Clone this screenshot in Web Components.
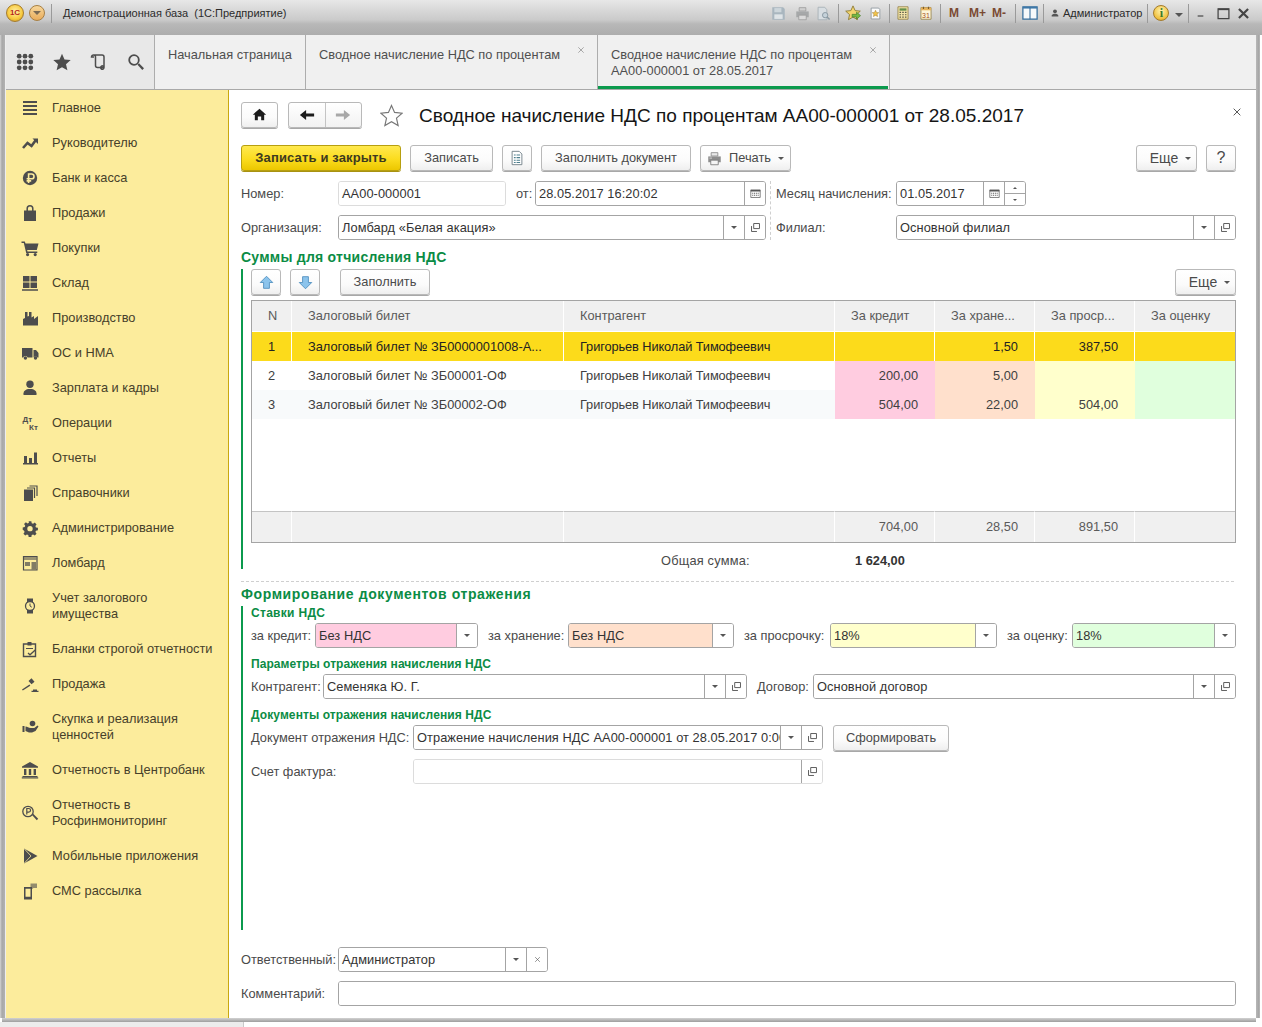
<!DOCTYPE html>
<html lang="ru">
<head>
<meta charset="utf-8">
<title>Сводное начисление НДС по процентам</title>
<style>
  html, body { margin: 0; padding: 0; background: #fff; overflow: hidden; }
  body { font: 12.8px/16px "Liberation Sans", Arial, sans-serif; color: #444; }
</style>
</head>
<body>
<app-shell></app-shell>

<script>
const ICONS = {
  menu: '<path d="M2 2h14v2H2zM2 6h14v2H2zM2 10h14v2H2zM2 14h14v2H2z"/>',
  trend: '<path d="M2 14l4.500-5 4 3 4-5.500" fill="none" stroke="currentColor" stroke-width="2.600"/><path d="M11.500 4.500H17V10z"/>',
  ruble: '<circle cx="9" cy="9" r="7.200"/><path d="M7.600 14V5h3a2.300 2.300 0 0 1 0 4.800H5.600M5.600 11.900h4.600" fill="none" stroke="#fcec9c" stroke-width="1.600"/>',
  bag: '<path d="M3 6.500h12V17H3z"/><path d="M6.200 7V4.600a2.800 2.800 0 0 1 5.600 0V7" fill="none" stroke="currentColor" stroke-width="1.500"/>',
  cart: '<path d="M0.500 2.500h3.300l.7 2h13l-1.700 6.500H6.100l.4 1.500h9.800v1.400H5.200L2.800 4H.5z"/><circle cx="6.600" cy="15.600" r="1.600"/><circle cx="14.200" cy="15.600" r="1.600"/>',
  shelves: '<path d="M2 2h6.500v5.500H2zM9.500 2H16v5.500H9.500zM2 8.500h6.500V14H2zM9.500 8.500H16V14H9.500zM1 15.300h16v1.400H1z"/>',
  factory: '<path d="M2 16.500V10l2-1V3h2.500v4.600L8 7V3h2.500v5.500l-.8.6 3.300-2.100v3l4-3v9.500z"/>',
  truck: '<path d="M1 4h10.500v9.500H6.600a2.400 2.400 0 0 0-4.400 0H1zM12.500 6H15l2.500 3v4.500h-1a2.400 2.400 0 0 0-4 0z"/><circle cx="4.400" cy="14" r="1.700"/><circle cx="14.500" cy="14" r="1.700"/>',
  person: '<circle cx="9" cy="5.200" r="3.700"/><path d="M2.500 16v-1.800c0-2.400 2.500-3.700 4.500-4.200h4c2 .5 4.500 1.800 4.500 4.200V16z"/>',
  dtkt: '<text x="1.500" y="8" font-family="Liberation Sans" font-weight="700" font-size="8">Дт</text><text x="8" y="15.500" font-family="Liberation Sans" font-weight="700" font-size="8">Кт</text>',
  bars: '<path d="M3 7h3v7H3zM8 9h3v5H8zM13 3.500h3V14h-3zM2 14h15v1.400H2z"/>',
  pages: '<path d="M3 5.500h9V17H3z"/><path d="M6 4h7.500v10" fill="none" stroke="currentColor" stroke-width="1.200"/><path d="M8.500 2H16v10" fill="none" stroke="currentColor" stroke-width="1.200"/>',
  gear: '<path fill-rule="evenodd" d="M7.500 1.500h3l.4 2.200 1.500.6 1.900-1.300 2 2-1.300 1.900.6 1.500 2.200.4v2.800l-2.200.4-.6 1.500 1.300 1.900-2 2-1.900-1.300-1.500.6-.4 2.200h-3l-.4-2.200-1.500-.6-1.900 1.300-2-2 1.300-1.900-.6-1.500L.9 11V8.400l2.200-.4.6-1.500-1.300-1.900 2-2 1.900 1.300 1.500-.6zM9 6.700a3 3 0 1 0 0 6 3 3 0 0 0 0-6z" transform="translate(.9 .9) scale(.9)"/>',
  shop: '<path d="M2.500 2.500h13.500V16H2.500z" fill="none" stroke="currentColor" stroke-width="1.200"/><path d="M3 3h12.500v3H3z" opacity=".55"/><path d="M4 8h5v4H4zM10.500 8h4.500v7.500h-4.500z" opacity=".7"/>',
  watch: '<path d="M6 1.500h6V5H6zM6 13h6v3.500H6z"/><circle cx="9" cy="9" r="4.500" fill="#fcec9c" stroke="currentColor" stroke-width="1.300"/><path d="M9 6.500V9l1.800 1.200" fill="none" stroke="currentColor"/>',
  clipboard: '<path d="M2.500 4h12v12.500h-12z" fill="none" stroke="currentColor" stroke-width="1.400"/><path d="M6.500 2h4v3.500h-4zM5 8h7v1H5z"/><path d="M7 13l2 1.800 5.500-5" fill="none" stroke="currentColor" stroke-width="1.300"/>',
  gavel: '<path d="M1 14.500l7.500-5 .8 1.200-7.500 4.800z"/><path d="M7.500 6l3-2.800 3 3.600-3 2.500zM12 14.500h4v1.200h-4zM10.500 15.800h7v1.200h-7z"/>',
  hand: '<circle cx="11.500" cy="5.500" r="2.800"/><path d="M1.500 8h2v6h-2zM4.500 8.500c2 0 3 1.500 5 1.500h3.800l3.200-2.500 1 1-3 4.500-3.500 1.500H8l-3.500-1.500z"/>',
  bank: '<path d="M9 1l8 4.500v1.300H1V5.500zM3 8h2.400v6H3zM7.800 8h2.400v6H7.800zM12.600 8H15v6h-2.400zM1.500 15h15v1H1.500zM.8 16.300h16.400v1.200H.8z"/>',
  monitor: '<circle cx="7" cy="7.500" r="5.200" fill="none" stroke="currentColor" stroke-width="1.300"/><path d="M5.800 10.500v-6h1.900a1.800 1.800 0 0 1 0 3.700H5.800" fill="none" stroke="currentColor" stroke-width="1.200"/><path d="M11 11l1.200-1.200 5 5-1.400 1.500z"/>',
  play: '<path d="M3 1.500L16.500 9 3 16.500z"/><path d="M3 1.500L10 9l-7 7.500" fill="none" stroke="#fcec9c" stroke-width=".8"/>',
  sms: '<path d="M3 5h8v12.500H3z M4.500 6.800v8h5v-8z" fill-rule="evenodd"/><path d="M9.500 1.500H16v4.500h-3.500L10.500 7.500V6h-1z" opacity=".6"/>',
  grid: '<circle cx="3.200" cy="3.200" r="2.400"/><circle cx="9" cy="3.200" r="2.400"/><circle cx="14.800" cy="3.200" r="2.400"/><circle cx="3.200" cy="9" r="2.400"/><circle cx="9" cy="9" r="2.400"/><circle cx="14.800" cy="9" r="2.400"/><circle cx="3.200" cy="14.800" r="2.400"/><circle cx="9" cy="14.800" r="2.400"/><circle cx="14.800" cy="14.800" r="2.400"/>',
  star: '<path d="M9 .8l2.500 5.700 6.200.6-4.700 4.100 1.400 6.100L9 14.200l-5.400 3.100L5 11.200.3 7.100l6.200-.6z"/>',
  starline: '<path d="M9 1.200l2.400 5.400 5.900.6-4.400 3.900 1.300 5.800L9 13.900l-5.200 3 1.300-5.800L.7 7.200l5.900-.6z" fill="none" stroke="currentColor" stroke-width=".9"/>',
  history: '<path d="M3.500 2h8.500a2 2 0 0 1 2 2v10.500a1.700 1.700 0 1 0 0 .1H7.500a2 2 0 0 1-2-2V4a2 2 0 0 0-2-2 2 2 0 0 0-2 2h2.500" fill="none" stroke="currentColor" stroke-width="1.500"/>',
  search: '<circle cx="7" cy="7" r="4.800" fill="none" stroke="currentColor" stroke-width="1.800"/><path d="M10.500 11.800l1.500-1.500 5 5-1.700 1.700z"/>',
  home: '<path d="M9 2l8 7.200h-2.400V16H11v-4.700H7V16H3.400V9.200H1z"/>',
  back: '<path d="M1 9l7-5.500V7.200h9v3.600H8v3.700z"/>',
  forward: '<path d="M17 9l-7-5.500V7.200H1v3.600h9v3.700z"/>',
  close: '<path d="M3 3l12 12M15 3L3 15" fill="none" stroke="currentColor" stroke-width="1.600"/>',
  open: '<path d="M6.500 3.500h8v7h-8z M3.500 7v7.500h7.500" fill="none" stroke="currentColor" stroke-width="1.300"/>',
  cal: '<path d="M2.500 4h13v10.500h-13z" fill="none" stroke="currentColor"/><path d="M2.500 4h13v2.200h-13z"/><path d="M4.500 8h1.400v1.200H4.500zM7 8h1.400v1.200H7zM9.500 8h1.400v1.200H9.500zM12 8h1.400v1.200H12zM4.500 10.800h1.400V12H4.500zM7 10.800h1.400V12H7zM9.500 10.800h1.400V12H9.500zM12 10.800h1.400V12H12z"/>',
  note: '<path d="M3.500 1.500h8l3 3v12h-11z" fill="#fff" stroke="#6d7c84"/><path d="M5.500 5h2v1.200h-2zM8.500 5h4v1.200h-4zM5.500 8h2v1.200h-2zM8.500 8h4v1.200h-4zM5.500 11h2v1.200h-2zM8.500 11h4v1.200h-4zM5.500 13.500h2v1h-2zM8.500 13.500h4v1h-4z" fill="#4d7f8e"/>',
  printer: '<path d="M5 2h8v4H5z" fill="#e9e9e9" stroke="#888"/><path d="M1.500 6.500h15v7h-15z" fill="#8d8d8d"/><path d="M4.500 11h9v5.500h-9z" fill="#f5f5f5" stroke="#777"/><path d="M3 8h3v1H3z" fill="#ddd"/>',
  up: '<path d="M9 1.500l7.500 7.500h-4v7h-7V9h-4z" fill="#8cc4ec" stroke="#4a8cbd"/>',
  down: '<path d="M9 16.500L1.500 9h4V2h7v7h4z" fill="#8cc4ec" stroke="#4a8cbd"/>',
  disk: '<path d="M1.500 1.500h13l2 2v13h-15z" fill="#a9b6bf"/><path d="M4 2.500h8.500v5H4z" fill="#cdd6db"/><path d="M4 10h10v5.500H4z" fill="#dfe4e7"/>',
  printer2: '<path d="M5 2h8v4H5z" fill="#cfcfcf" stroke="#9c9c9c"/><path d="M1.500 6.500h15v7h-15z" fill="#a6a8a9"/><path d="M4.500 11h9v5.500h-9z" fill="#dadada" stroke="#9c9c9c"/>',
  preview: '<path d="M2.500 1.500h8l2.500 3v12h-10.500z" fill="#d8dee2" stroke="#a3aeb5"/><circle cx="11" cy="11" r="3.200" fill="#c5d2da" stroke="#8b9aa3" stroke-width="1.200"/><path d="M13.300 13.300l3 3" stroke="#8b9aa3" stroke-width="1.800"/>',
  favgo: '<path d="M9 1l2.400 5.300 5.800.6-4.300 3.900 1.200 5.700L9 13.600l-5.100 2.900 1.200-5.700L.8 6.900l5.800-.6z" fill="#f3d56f" stroke="#8c7a32"/><path d="M8 10.500h5V8l4.500 4-4.500 4v-2.500H8z" fill="#77b944" stroke="#41772a" stroke-width=".7"/>',
  favdoc: '<path d="M3 1.500h10.500l1.500 2v13H3z" fill="#fbfbfb" stroke="#7c8790"/><path d="M9 4.500l1.400 3 3.200.3-2.400 2.200.7 3.200L9 11.600l-2.900 1.600.7-3.200-2.400-2.200 3.200-.3z" fill="#f0c34a" stroke="#97742a" stroke-width=".6"/>',
  calc: '<path d="M2.500 1h13v16h-13z" fill="#f5e5a8" stroke="#8f7b3e"/><path d="M4.500 3h9v3h-9z" fill="#64914b"/><path d="M4.500 7.500h2v1.500h-2zM8 7.500h2v1.500H8zM11.500 7.500h2v1.500h-2zM4.500 10.500h2V12h-2zM8 10.500h2V12H8zM11.500 10.500h2V12h-2zM4.500 13.500h2V15h-2zM8 13.500h2V15H8zM11.500 13.500h2V15h-2z" fill="#5b5b4a"/>',
  cal31: '<path d="M2.500 2h13v15h-13z" fill="#fdf5d8" stroke="#8f7b3e"/><path d="M2.500 2h13v3.500h-13z" fill="#e8b25a"/><path d="M5 1h1.500v3H5zM11.500 1H13v3h-1.500z" fill="#7a5a2e"/><text x="9" y="15" text-anchor="middle" font-family="Liberation Sans" font-size="9" fill="#a5521f">31</text>',
  panels: '<path d="M1 2h16v14H1z" fill="#f6f9fb" stroke="#346d9c" stroke-width="1.400"/><path d="M1 2h16v2H1z" fill="#3d78a8"/><path d="M9 3v13" stroke="#346d9c" stroke-width="1.200"/>',
  user: '<circle cx="9" cy="6" r="3.500"/><path d="M3 15.500v-1.500c0-2 2.500-3.300 4.500-3.700h3c2 .4 4.500 1.700 4.500 3.700v1.500z"/>',
  winmax: '<path d="M2.500 3.500h13v11.500h-13z" fill="none" stroke="currentColor" stroke-width="1.500"/><path d="M2.500 3h13v2h-13z"/>',
  winmin: '<path d="M4 12.500h8.500v2H4z"/>',
  winclose: '<path d="M3.500 3.500l11 11M14.500 3.500l-11 11" fill="none" stroke="currentColor" stroke-width="2.600"/>'
};

function tpl(html) {
  const t = document.createElement('template');
  t.innerHTML = html;
  return t;
}

// sets the host width from the w attribute
function applyWidth(el) {
  if (el.hasAttribute('w')) el.style.width = el.getAttribute('w') + 'px';
}

class OneIcon extends HTMLElement {
  connectedCallback() {
    const size = this.getAttribute('size') || 18;
    const root = this.shadowRoot || this.attachShadow({ mode: 'open' });
    root.innerHTML = `<style>:host{display:inline-flex;flex:none;line-height:0}svg{display:block;fill:currentColor}</style>
      <svg xmlns="http://www.w3.org/2000/svg" width="${size}" height="${size}" viewBox="0 0 18 18">${ICONS[this.getAttribute('name')] || ''}</svg>`;
  }
}
customElements.define('one-icon', OneIcon);

const labelTemplate = tpl(`<style>
  :host { display: flex; flex: none; align-items: center; height: 25px; white-space: nowrap; color: #4a4a4a; }
</style><slot></slot>`);

class OneLabel extends HTMLElement {
  constructor() {
    super();
    this.attachShadow({ mode: 'open' }).appendChild(labelTemplate.content.cloneNode(true));
  }
  connectedCallback() { applyWidth(this); }
}
customElements.define('one-label', OneLabel);

const btnTemplate = tpl(`<style>
  :host { display: inline-flex; flex: none; box-sizing: border-box; height: 26px; align-items: center; justify-content: center; gap: 7px;
    border: 1px solid #b9b9b9; border-radius: 3px; background: linear-gradient(#fff, #fbfbfb 60%, #efefef);
    box-shadow: 0 1px 0 #a8a8a8; color: #4a4a4a; white-space: nowrap; margin-bottom: 1px; }
  :host([primary]) { border-color: #b79f10; background: linear-gradient(#ffe94f, #fbdc1e 55%, #ecc700); box-shadow: 0 1px 0 #a89212; color: #3d3a20; font-weight: 700; font-size: 13px; letter-spacing: .15px; }
  :host([more]) { font-size: 14px; padding-left: 8px; }
  .arrow { display: none; width: 0; height: 0; border: 3px solid transparent; border-top: 3px solid #555; border-bottom: 0; }
  :host([drop]) .arrow { display: block; }
</style><slot></slot><span class="arrow"></span>`);

class OneBtn extends HTMLElement {
  constructor() {
    super();
    this.attachShadow({ mode: 'open' }).appendChild(btnTemplate.content.cloneNode(true));
  }
  connectedCallback() { applyWidth(this); }
}
customElements.define('one-btn', OneBtn);

const fieldTemplate = tpl(`<style>
  :host { display: flex; flex: none; box-sizing: border-box; height: 25px; border: 1px solid #a4a4a4; border-radius: 3px; background: #fff; overflow: hidden; color: #333; letter-spacing: .07px; }
  :host([light]) { border-color: #dcdcdc; }
  .val { flex: 1; min-width: 0; display: flex; align-items: center; padding-left: 3px; white-space: nowrap; overflow: hidden; background: var(--tone, #fff); }
  .b { flex: none; width: 21px; box-sizing: border-box; border-left: 1px solid #a4a4a4; display: flex; align-items: center; justify-content: center; background: #fff; color: #555; }
  .b i { display: block; width: 0; height: 0; border: 3px solid transparent; border-top: 3px solid #555; border-bottom: 0; }
  .spin { flex-direction: column; }
  .spin span { flex: 1; width: 100%; display: flex; align-items: center; justify-content: center; }
  .spin span + span { border-top: 1px solid #a4a4a4; }
  .spin .u { border: 2px solid transparent; border-bottom: 2px solid #555; border-top: 0; }
  .spin .d { border: 2px solid transparent; border-top: 2px solid #555; border-bottom: 0; }
</style><div class="val"><slot></slot></div><span id="btns" style="display:contents"></span>`);

const FIELD_BTNS = {
  drop: '<div class="b"><i></i></div>',
  open: '<div class="b"><one-icon name="open" size="13"></one-icon></div>',
  cal: '<div class="b"><one-icon name="cal" size="13"></one-icon></div>',
  clear: '<div class="b"><one-icon name="close" size="7"></one-icon></div>',
  spin: '<div class="b spin"><span><i class="u"></i></span><span><i class="d"></i></span></div>'
};

class OneField extends HTMLElement {
  constructor() {
    super();
    this.attachShadow({ mode: 'open' }).appendChild(fieldTemplate.content.cloneNode(true));
  }
  connectedCallback() {
    applyWidth(this);
    const tone = this.getAttribute('tone');
    if (tone) this.style.setProperty('--tone', tone);
    const btns = (this.getAttribute('buttons') || '').split(',').filter(Boolean);
    this.shadowRoot.getElementById('btns').innerHTML = btns.map(b => FIELD_BTNS[b]).join('');
  }
}
customElements.define('one-field', OneField);

const titleTemplate = tpl(`<style>
  :host { display: flex; height: 35px; box-sizing: border-box; padding-top: 1px; align-items: flex-start; flex: none;
    background: linear-gradient(#e7e7e7 0, #cacaca 20px, #b8b8b8 24px, #adadad 35px); color: #2b2b2b; font-size: 11px; }
  .row { display: flex; align-items: center; height: 24px; width: 100%; }
  .row > * { flex: none; }
  .sep { width: 1px; height: 19px; background: #9a9a9a; }
  .logo { width: 18px; height: 18px; margin-left: 6px; border-radius: 50%; background: radial-gradient(circle at 50% 40%, #fff0a8, #f8c93c 60%, #b9862a); border: 1px solid #a57b2a; box-sizing: border-box;
    color: #b5251b; font: 700 8px/16px "Liberation Sans", sans-serif; text-align: center; }
  .menu { width: 16px; height: 16px; margin-left: 5px; border-radius: 50%; background: linear-gradient(#f7d79b, #e9ac5c); border: 1px solid #a87f42; box-sizing: border-box; display: flex; align-items: center; justify-content: center; }
  .menu i { width: 0; height: 0; border: 4px solid transparent; border-top: 4px solid #7b6a54; border-bottom: 0; }
  .name { margin-left: 11px; width: 703px; }
  .m { font-weight: 700; font-size: 12px; color: #7a4a33; }
  .info { width: 16px; height: 16px; border-radius: 50%; background: radial-gradient(circle at 50% 35%, #fff3b0, #f0c03c 70%, #b98a27); border: 1px solid #a57b2a; box-sizing: border-box; color: #3a7a2a; font: 700 12px/14px "Liberation Serif", serif; text-align: center; }
  .mini { width: 0; height: 0; border: 4px solid transparent; border-top: 4px solid #555; border-bottom: 0; margin-top: 4px; box-shadow: 0 3px 0 -2px #555; }
</style>
<div class="row">
  <div class="logo">1С</div>
  <div class="menu"><i></i></div>
  <div class="sep" style="margin-left:6px"></div>
  <div class="name">Демонстрационная база &nbsp;(1С:Предприятие)</div>
  <one-icon name="disk" size="15" style="margin-left:5px"></one-icon>
  <one-icon name="printer2" size="15" style="margin-left:9px"></one-icon>
  <one-icon name="preview" size="15" style="margin-left:6px"></one-icon>
  <div class="sep" style="margin-left:7px"></div>
  <one-icon name="favgo" size="16" style="margin-left:6px"></one-icon>
  <one-icon name="favdoc" size="13" style="margin-left:8px"></one-icon>
  <div class="sep" style="margin-left:7px"></div>
  <one-icon name="calc" size="14" style="margin-left:6px"></one-icon>
  <one-icon name="cal31" size="14" style="margin-left:9px"></one-icon>
  <div class="sep" style="margin-left:7px"></div>
  <span class="m" style="margin-left:8px">М</span>
  <span class="m" style="margin-left:10px">М+</span>
  <span class="m" style="margin-left:6px">М-</span>
  <div class="sep" style="margin-left:9px"></div>
  <one-icon name="panels" size="16" style="margin-left:6px"></one-icon>
  <div class="sep" style="margin-left:5px"></div>
  <one-icon name="user" size="10" style="margin-left:6px;color:#555"></one-icon>
  <span style="margin-left:3px">Администратор</span>
  <div class="sep" style="margin-left:5px"></div>
  <div class="info" style="margin-left:5px">i</div>
  <i class="mini" style="margin-left:6px"></i>
  <div class="sep" style="margin-left:5px"></div>
  <one-icon name="winmin" size="12" style="margin-left:6px;color:#555"></one-icon>
  <one-icon name="winmax" size="15" style="margin-left:9px;color:#444"></one-icon>
  <one-icon name="winclose" size="15" style="margin-left:5px;color:#444"></one-icon>
</div>`);

class TitleBar extends HTMLElement {
  constructor() {
    super();
    this.attachShadow({ mode: 'open' }).appendChild(titleTemplate.content.cloneNode(true));
  }
}
customElements.define('title-bar', TitleBar);

const tabsTemplate = tpl(`<style>
  :host { display: flex; height: 55px; flex: none; box-sizing: border-box; border-bottom: 1px solid #a9a9a9; background: #f0f0f0; color: #4f4f4f; }
  .tools { width: 148px; flex: none; display: flex; align-items: center; background: #e8e8e8; border-right: 1px solid #adadad; color: #4d4d4d; }
  .tab { flex: none; box-sizing: border-box; position: relative; display: flex; justify-content: space-between; align-items: flex-start; padding: 12px 12px 0 13px; border-right: 1px solid #adadad; white-space: nowrap; }
  .tab one-icon { margin-top: -1px; color: #8a8a8a; }
  .tab.on::after { content: ""; position: absolute; left: 0; right: 1px; bottom: 0; height: 3px; background: #0b9a4d; }
</style>
<div class="tools">
  <one-icon name="grid" style="margin-left:10px"></one-icon>
  <one-icon name="star" style="margin-left:19px"></one-icon>
  <one-icon name="history" style="margin-left:19px"></one-icon>
  <one-icon name="search" style="margin-left:19px"></one-icon>
</div>
<div class="tab" style="width:151px"><span>Начальная страница</span></div>
<div class="tab" style="width:292px"><span>Сводное начисление НДС по процентам</span><one-icon name="close" size="8"></one-icon></div>
<div class="tab on" style="width:292px"><span>Сводное начисление НДС по процентам<br>АА00-000001 от 28.05.2017</span><one-icon name="close" size="8"></one-icon></div>`);

class TabBar extends HTMLElement {
  constructor() {
    super();
    this.attachShadow({ mode: 'open' }).appendChild(tabsTemplate.content.cloneNode(true));
  }
}
customElements.define('tab-bar', TabBar);

const SECTIONS = [
  ['menu', 'Главное'], ['trend', 'Руководителю'], ['ruble', 'Банк и касса'], ['bag', 'Продажи'],
  ['cart', 'Покупки'], ['shelves', 'Склад'], ['factory', 'Производство'], ['truck', 'ОС и НМА'],
  ['person', 'Зарплата и кадры'], ['dtkt', 'Операции'], ['bars', 'Отчеты'], ['pages', 'Справочники'],
  ['gear', 'Администрирование'], ['shop', 'Ломбард'], ['watch', 'Учет залогового<br>имущества'],
  ['clipboard', 'Бланки строгой отчетности'], ['gavel', 'Продажа'], ['hand', 'Скупка и реализация<br>ценностей'],
  ['bank', 'Отчетность в Центробанк'], ['monitor', 'Отчетность в<br>Росфинмониторинг'], ['play', 'Мобильные приложения'], ['sms', 'СМС рассылка']
];

class SideNav extends HTMLElement {
  connectedCallback() {
    const root = this.shadowRoot || this.attachShadow({ mode: 'open' });
    root.innerHTML = `<style>
      :host { display: block; flex: none; width: 223px; box-sizing: border-box; background: #fcec9c; border-right: 1px solid #c9a80f; color: #46402a; }
      .item { display: flex; align-items: center; gap: 13px; padding: 10px 0 9px 15px; }
      one-icon { color: #4d4d4d; margin: -1px 0; }
    </style>` + SECTIONS.map(([icon, text]) =>
      `<div class="item"><one-icon name="${icon}"></one-icon><span>${text}</span></div>`).join('');
  }
}
customElements.define('side-nav', SideNav);

const ROWS = [
  { cls: 'sel', cells: ['1', 'Залоговый билет № ЗБ0000001008-А...', 'Григорьев Николай Тимофеевич', '', '1,50', '387,50', ''] },
  { cells: ['2', 'Залоговый билет № ЗБ00001-ОФ', 'Григорьев Николай Тимофеевич', '200,00', '5,00', '', ''] },
  { cls: 'alt', cells: ['3', 'Залоговый билет № ЗБ00002-ОФ', 'Григорьев Николай Тимофеевич', '504,00', '22,00', '504,00', ''] }
];

class VatTable extends HTMLElement {
  connectedCallback() {
    const row = (cls, cells) => `<div class="row ${cls}">` + cells.map((c, i) =>
      `<div class="c c${i}">${c}</div>`).join('') + '</div>';
    const root = this.shadowRoot || this.attachShadow({ mode: 'open' });
    root.innerHTML = `<style>
      :host { display: flex; flex-direction: column; box-sizing: border-box; height: 243px; border: 1px solid #a4a4a4; color: #404040; }
      .row { display: grid; grid-template-columns: 40px 272px 271px 100px 100px 100px 100px; height: 29px; }
      .c { box-sizing: border-box; padding: 0 16px; display: flex; align-items: center; white-space: nowrap; overflow: hidden; border-right: 1px solid transparent; }
      .c2 { letter-spacing: -.1px; }
      .c3, .c4, .c5, .c6 { justify-content: flex-end; }
      .c6 { border-right: 0; }
      .head { height: 31px; }
      .head .c, .foot .c { background: #f0f0f0; background-clip: padding-box; border-right-color: #fff; color: #5a5a5a; letter-spacing: 0; }
      .head .c { justify-content: flex-start; border-bottom: 1px solid #fff; }
      .foot { height: 31px; margin-top: auto; }
      .foot .c { border-top: 1px solid #c4c4c4; }
      .sel .c { background: #fcdb1b; background-clip: padding-box; border-right-color: #fff; color: #222; }
      .alt .c0, .alt .c1, .alt .c2 { background: #f8fafb; }
      .row:not(.sel):not(.head):not(.foot) .c3 { background: #ffcce0; }
      .row:not(.sel):not(.head):not(.foot) .c4 { background: #ffe0cc; }
      .row:not(.sel):not(.head):not(.foot) .c5 { background: #ffffcc; }
      .row:not(.sel):not(.head):not(.foot) .c6 { background: #e0ffdd; }
    </style>` +
      row('head', ['N', 'Залоговый билет', 'Контрагент', 'За кредит', 'За хране...', 'За проср...', 'За оценку']) +
      ROWS.map(r => row(r.cls || '', r.cells)).join('') +
      row('foot', ['', '', '', '704,00', '28,50', '891,50', '']);
  }
}
customElements.define('vat-table', VatTable);

const formTemplate = tpl(`<style>
  :host { display: block; flex: 1; min-width: 0; box-sizing: border-box; background: #fff; padding: 12px 20px 0 12px; }
  .flex { display: flex; }
  .head { height: 26px; align-items: center; margin-bottom: 17px; }
  h1 { margin: 1px 0 0 16px; font: 400 19.05px/26px "Liberation Sans", Arial, sans-serif; color: #151515; white-space: nowrap; }
  .nav { display: flex; box-sizing: border-box; width: 74px; height: 26px; margin-left: 10px; border: 1px solid #b9b9b9; border-radius: 3px; box-shadow: 0 1px 0 #a8a8a8; background: linear-gradient(#fff, #f2f2f2); }
  .nav div { flex: 1; display: flex; align-items: center; justify-content: center; }
  .nav div + div { border-left: 1px solid #c4c4c4; color: #a8a8a8; }
  .nav div:first-child { color: #1c1c1c; }
  .bar { gap: 9px; height: 27px; }
  .cols { display: flex; margin-top: 9px; }
  .cols .l { width: 525px; flex: none; }
  .cols .r { margin-left: 4px; border-left: 1px dashed #cfcfcf; padding-left: 5px; flex: 1; }
  .fr { display: flex; align-items: center; height: 25px; }
  .fr + .fr { margin-top: 9px; }
  h2 { margin: 10px 0 4px; height: 15px; font: 700 14px/15px "Liberation Sans", Arial, sans-serif; color: #0b8c45; white-space: nowrap; }
  h3 { margin: 0; height: 14px; font: 700 12px/14px "Liberation Sans", Arial, sans-serif; color: #0b8c45; white-space: nowrap; }
  .grp { border-left: 2px solid #0b9a4d; padding-left: 8px; }
  .g1 { height: 300px; }
  .g2 { height: 324px; }
  vat-table { margin-top: 4px; }
  .total { display: flex; height: 26px; box-sizing: border-box; padding: 9px 0 0 410px; line-height: 18px; }
  .total span { width: 194px; color: #4a4a4a; letter-spacing: .2px; }
  .total b { color: #333; }
  .dash { margin: 12px 2px 0 0; border-top: 1px dashed #cfcfcf; height: 0; }
  .dash + h2 { margin-top: 5px; }
  h3 + .fr { margin-top: 3px; }
  .fr + h3 { margin-top: 9px; }
  .m10 { margin-left: 10px; }
  .end { margin-left: auto; }
</style>
<div class="flex head">
  <one-btn w="37" style="color:#1c1c1c"><one-icon name="home" size="15"></one-icon></one-btn>
  <div class="nav"><div><one-icon name="back" size="16"></one-icon></div><div><one-icon name="forward" size="16"></one-icon></div></div>
  <one-icon name="starline" size="23" style="margin-left:18px;color:#777"></one-icon>
  <h1>Сводное начисление НДС по процентам АА00-000001 от 28.05.2017</h1>
  <one-icon name="close" size="10" class="end" style="margin-right:-6px;margin-top:-7px;color:#444"></one-icon>
</div>
<div class="flex bar">
  <one-btn primary w="160">Записать и закрыть</one-btn>
  <one-btn w="83">Записать</one-btn>
  <one-btn w="30"><one-icon name="note" size="16"></one-icon></one-btn>
  <one-btn w="150">Заполнить документ</one-btn>
  <one-btn w="91" drop><one-icon name="printer" size="15"></one-icon>Печать</one-btn>
  <one-btn class="end" w="61" drop more>Еще</one-btn>
  <one-btn w="30" style="font-size:16px">?</one-btn>
</div>
<div class="cols">
  <div class="l">
    <div class="fr">
      <one-label w="97">Номер:</one-label>
      <one-field w="168" light>АА00-000001</one-field>
      <one-label w="19" class="m10">от:</one-label>
      <one-field w="231" buttons="cal">28.05.2017 16:20:02</one-field>
    </div>
    <div class="fr">
      <one-label w="97">Организация:</one-label>
      <one-field w="428" buttons="drop,open">Ломбард «Белая акация»</one-field>
    </div>
  </div>
  <div class="r">
    <div class="fr">
      <one-label w="120">Месяц начисления:</one-label>
      <one-field w="130" buttons="cal,spin">01.05.2017</one-field>
    </div>
    <div class="fr">
      <one-label w="120">Филиал:</one-label>
      <one-field w="340" buttons="drop,open">Основной филиал</one-field>
    </div>
  </div>
</div>

<h2 style="letter-spacing:.25px">Суммы для отчисления НДС</h2>
<div class="grp g1">
  <div class="flex bar">
    <one-btn w="30"><one-icon name="up" size="15"></one-icon></one-btn>
    <one-btn w="30"><one-icon name="down" size="15"></one-icon></one-btn>
    <one-btn w="90" style="margin-left:11px">Заполнить</one-btn>
    <one-btn class="end" w="61" drop more>Еще</one-btn>
  </div>
  <vat-table></vat-table>
  <div class="total"><span>Общая сумма:</span><b>1 624,00</b></div>
</div>

<div class="dash"></div>
<h2 style="letter-spacing:.6px">Формирование документов отражения</h2>
<div class="grp g2">
  <h3 style="letter-spacing:.3px">Ставки НДС</h3>
  <div class="fr">
    <one-label w="64">за кредит:</one-label>
    <one-field w="163" tone="#ffcce0" buttons="drop">Без НДС</one-field>
    <one-label w="80" class="m10">за хранение:</one-label>
    <one-field w="166" tone="#ffe0cc" buttons="drop">Без НДС</one-field>
    <one-label w="86" class="m10">за просрочку:</one-label>
    <one-field w="167" tone="#ffffcc" buttons="drop">18%</one-field>
    <one-label w="65" class="m10">за оценку:</one-label>
    <one-field w="164" tone="#e0ffdd" buttons="drop">18%</one-field>
  </div>
  <h3 style="letter-spacing:.06px">Параметры отражения начисления НДС</h3>
  <div class="fr">
    <one-label w="72">Контрагент:</one-label>
    <one-field w="424" buttons="drop,open">Семеняка Ю. Г.</one-field>
    <one-label w="56" class="m10">Договор:</one-label>
    <one-field w="423" buttons="drop,open">Основной договор</one-field>
  </div>
  <h3 style="letter-spacing:.09px">Документы отражения начисления НДС</h3>
  <div class="fr">
    <one-label w="162">Документ отражения НДС:</one-label>
    <one-field w="410" buttons="drop,open">Отражение начисления НДС АА00-000001 от 28.05.2017 0:00:00</one-field>
    <one-btn w="116" class="m10" style="align-self:flex-start">Сформировать</one-btn>
  </div>
  <div class="fr">
    <one-label w="162">Счет фактура:</one-label>
    <one-field w="410" light buttons="open"></one-field>
  </div>
</div>

<div class="fr" style="margin-top:17px">
  <one-label w="97">Ответственный:</one-label>
  <one-field w="210" buttons="drop,clear">Администратор</one-field>
</div>
<div class="fr" style="margin-top:9px">
  <one-label w="97">Комментарий:</one-label>
  <one-field w="898"></one-field>
</div>`);

class DocForm extends HTMLElement {
  constructor() {
    super();
    this.attachShadow({ mode: 'open' }).appendChild(formTemplate.content.cloneNode(true));
  }
}
customElements.define('doc-form', DocForm);

const shellTemplate = tpl(`<style>
  :host { display: flex; flex-direction: column; width: 1262px; height: 1027px; overflow: hidden; background: #fff; }
  .mid { display: flex; height: 983px; flex: none; }
  .edge-l { width: 6px; flex: none; background: linear-gradient(90deg, #d4d4d4 0, #a8a8a8 2px, #b2b2b2 5px, #eee 5px); }
  .edge-r { width: 6px; flex: none; background: linear-gradient(90deg, #b8b8b8 0, #a4a4a4 3px, #666 3px, #fff 4px); }
  .main { flex: 1; min-width: 0; display: flex; flex-direction: column; }
  .work { flex: 1; min-height: 0; display: flex; }
  .bottom { flex: none; height: 4px; margin: 0 6px 0 2px; background: linear-gradient(#d2d2d2, #9e9e9e); }
  .rest { flex: 1; display: flex; }
  .rest div { width: 243px; background: #ececec; border-right: 1px solid #c9c9c9; }
</style>
<title-bar></title-bar>
<div class="mid">
  <div class="edge-l"></div>
  <div class="main">
    <tab-bar></tab-bar>
    <div class="work"><side-nav></side-nav><doc-form></doc-form></div>
  </div>
  <div class="edge-r"></div>
</div>
<div class="bottom"></div>
<div class="rest"><div></div></div>`);

class AppShell extends HTMLElement {
  constructor() {
    super();
    this.attachShadow({ mode: 'open' }).appendChild(shellTemplate.content.cloneNode(true));
  }
}
customElements.define('app-shell', AppShell);
</script>
</body>
</html>
